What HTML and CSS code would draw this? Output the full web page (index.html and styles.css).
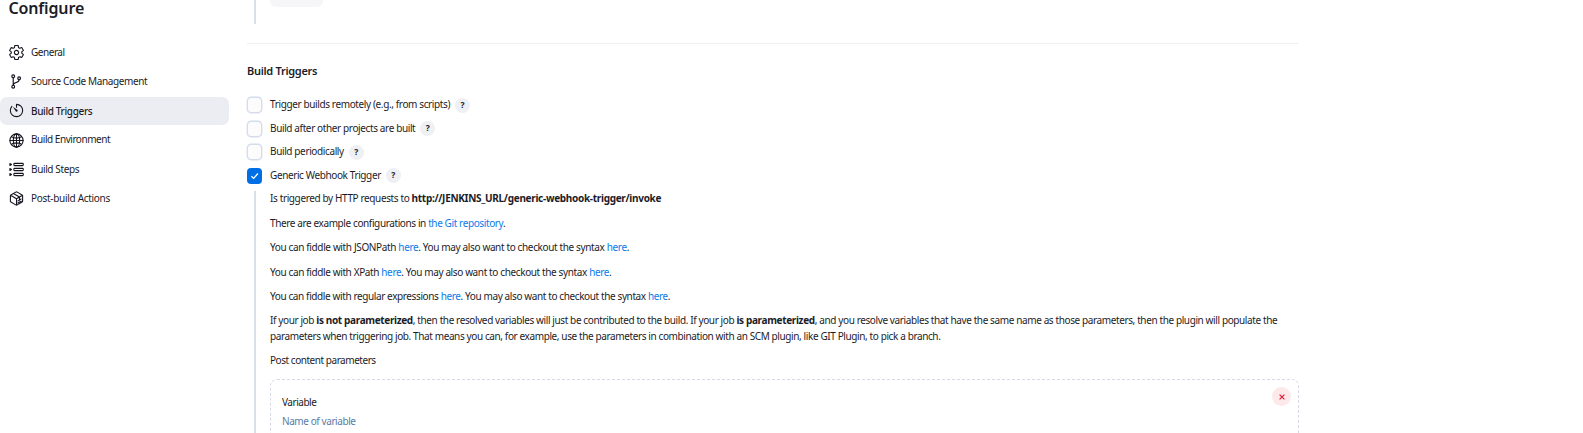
FILE: index.html
```html
<!DOCTYPE html>
<html lang="en">
<head>
<meta charset="utf-8">
<title>Configure</title>
<link rel="stylesheet" href="styles.css">
</head>
<body>
<div class="page">
  <aside class="side">
    <h1 class="title">Configure</h1>
    <nav class="nav">
      <a class="nav-item"><svg class="icon" viewBox="28 28 456 456"><path d="M262.29 192.31a64 64 0 1057.4 57.4 64.13 64.13 0 00-57.4-57.4zM416.39 256a154.34 154.34 0 01-1.53 20.79l45.21 35.46a10.81 10.81 0 012.45 13.75l-42.77 74a10.81 10.81 0 01-13.14 4.59l-44.9-18.08a16.11 16.11 0 00-15.17 1.75A164.48 164.48 0 01325 400.8a15.94 15.94 0 00-8.82 12.14l-6.73 47.89a11.08 11.08 0 01-10.68 9.17h-85.54a11.11 11.11 0 01-10.69-8.87l-6.72-47.82a16.07 16.07 0 00-9-12.22 155.3 155.3 0 01-21.46-12.57 16 16 0 00-15.11-1.71l-44.89 18.07a10.81 10.81 0 01-13.14-4.58l-42.77-74a10.8 10.8 0 012.45-13.75l38.21-30a16.05 16.05 0 006-14.08c-.36-4.17-.58-8.33-.58-12.5s.21-8.27.58-12.35a16 16 0 00-6.07-13.94l-38.19-30A10.81 10.81 0 0149.48 186l42.77-74a10.81 10.81 0 0113.14-4.59l44.9 18.08a16.11 16.11 0 0015.17-1.75A164.48 164.48 0 01187 111.2a15.94 15.94 0 008.82-12.14l6.73-47.89A11.08 11.08 0 01213.23 42h85.54a11.11 11.11 0 0110.69 8.87l6.72 47.82a16.07 16.07 0 009 12.22 155.3 155.3 0 0121.46 12.57 16 16 0 0015.11 1.71l44.89-18.07a10.81 10.81 0 0113.14 4.58l42.77 74a10.8 10.8 0 01-2.45 13.75l-38.21 30a16.05 16.05 0 00-6.05 14.08c.33 4.14.55 8.3.55 12.47z"/></svg><span class="tight">General</span></a>
      <a class="nav-item"><svg class="icon branch" viewBox="16 0 512 512"><circle cx="160" cy="80" r="48"/><circle cx="160" cy="432" r="48"/><circle cx="362" cy="144" r="48"/><path d="M160 384V128M362 192c0 128-202 64-202 192"/></svg><span>Source Code Management</span></a>
      <a class="nav-item active"><svg class="icon" viewBox="22 22 468 468"><path d="M112.91 128A191.85 191.85 0 0064 254c-1.18 106.35 85.65 193.8 192 194 106.2.2 192-85.83 192-192 0-104.54-83.55-189.61-187.5-192a4.36 4.36 0 00-4.5 4.37V152"/><path class="solid" d="M233.38 278.63l-79-113a8.13 8.13 0 0111.32-11.32l113 79a32.5 32.5 0 01-37.25 53.26 33.21 33.21 0 01-8.07-7.94z"/></svg><span class="loose">Build Triggers</span></a>
      <a class="nav-item"><svg class="icon" viewBox="20 20 472 472"><circle cx="256" cy="256" r="208"/><ellipse cx="256" cy="256" rx="100" ry="208"/><path d="M256 48v416M48 256h416M98 140q158 80 316 0M98 372q158-80 316 0"/></svg><span class="tight">Build Environment</span></a>
      <a class="nav-item"><svg class="icon" viewBox="16 16 480 480"><rect x="172" y="60" width="300" height="72" rx="20"/><rect x="172" y="220" width="300" height="72" rx="20"/><rect x="172" y="380" width="300" height="72" rx="20"/><path d="M44 64l52 32-52 32zM44 224l52 32-52 32zM44 384l52 32-52 32z"/></svg><span>Build Steps</span></a>
      <a class="nav-item"><svg class="icon" viewBox="20 20 472 472"><path d="M448 341.37V170.61A32 32 0 00432.11 143l-152-88.46a47.94 47.94 0 00-48.24 0L79.89 143A32 32 0 0064 170.61v170.76A32 32 0 0079.89 369l152 88.46a48 48 0 0048.24 0l152-88.46A32 32 0 00448 341.37zM69 153.99l187 110 187-110M256 463.99v-200M160 99l190 112v100M300 330l100-60M300 400l100-60"/></svg><span class="looser">Post-build Actions</span></a>
    </nav>
  </aside>
  <main class="main">
    <div class="previous"><div class="previous-button"></div></div>
    <h2 class="section">Build Triggers</h2>
    <div class="checks">
      <label class="check"><i class="box"></i><span>Trigger builds remotely (e.g., from scripts)</span><b class="help">?</b></label>
      <label class="check"><i class="box"></i><span>Build after other projects are built</span><b class="help">?</b></label>
      <label class="check"><i class="box"></i><span>Build periodically</span><b class="help">?</b></label>
      <label class="check"><i class="box on"><svg viewBox="0 0 15 16"><path d="M4.4 8.2l2.2 2.2 4.3-4.9"/></svg></i><span class="regex">Generic Webhook Trigger</span><b class="help">?</b></label>
    </div>
    <div class="details">
      <p>Is triggered by HTTP requests to <strong>http://JENKINS_URL/generic-webhook-trigger/invoke</strong></p>
      <p class="regex">There are example configurations in <a>the Git repository</a>.</p>
      <p class="loose-links">You can fiddle with JSONPath <a>here</a>. You may also want to checkout the syntax <a>here</a>.</p>
      <p>You can fiddle with XPath <a>here</a>. You may also want to checkout the syntax <a>here</a>.</p>
      <p class="regex">You can fiddle with regular expressions <a>here</a>. You may also want to checkout the syntax <a>here</a>.</p>
      <p class="job">If your job <strong>is not parameterized</strong>, then the resolved variables will just be contributed to the build. If your job <strong>is parameterized</strong>, and you resolve variables that have the same name as those parameters, then the plugin will populate the<br><span class="regex">parameters when triggering job. That means you can, for example, use the parameters in combination with an SCM plugin, like GIT Plugin, to pick a branch.</span></p>
      <p class="tight">Post content parameters</p>
      <div class="param">
        <button class="delete"><svg viewBox="0 0 10 10"><path d="M2.6 2.6l4.8 4.8M7.4 2.6l-4.8 4.8"/></svg></button>
        <div class="label tight">Variable</div>
        <div class="hint">Name of variable</div>
      </div>
    </div>
  </main>
</div>
</body>
</html>
```

FILE: styles.css
```css
* { box-sizing: border-box; }
body { margin: 0; background: #fff; color: #1c1c27; font: 10px/15.4px "Noto Sans", "Open Sans", sans-serif; letter-spacing: -.375px; overflow: hidden; }
.page { display: flex; height: 433px; overflow: hidden; }
.side { width: 247px; flex: none; }
.title { margin: 0; padding-left: 8.5px; height: 38.3px; font-size: 16px; line-height: 16px; font-weight: 600; letter-spacing: -.15px; white-space: nowrap; }
.nav { display: flex; flex-direction: column; gap: 1.3px; }
.nav-item { display: flex; align-items: center; width: 228.5px; height: 28px; padding-left: 8.5px; gap: 7.5px; border-radius: 7px; white-space: nowrap; }
.nav-item.active { background: #ecedf3; font-weight: 500; }
.nav-item.active span { padding-top: 1px; }
.tight { letter-spacing: -.46px; }
.loose { letter-spacing: -.36px; }
.looser { letter-spacing: -.3px; }
.loose-links { letter-spacing: -.363px; }
.icon { width: 15px; height: 15px; fill: none; stroke: #14141f; stroke-width: 34; stroke-linecap: round; stroke-linejoin: round; }
.icon.branch { stroke-width: 40; }
.icon .solid { fill: #14141f; stroke: none; }
.main { width: 1052px; flex: none; }
.previous { height: 24px; margin-left: 7px; border-left: 2px solid #d9dfeb; padding-left: 14px; }
.previous-button { width: 53px; height: 6.5px; background: #f6f6f8; border-radius: 0 0 6px 6px; }
.section { margin: 19px 0 0; border-top: 1px solid #f0f1f4; padding-top: 19px; height: 54px; font-size: 11px; line-height: 16px; font-weight: 600; letter-spacing: -.29px; }
.checks { display: flex; flex-direction: column; gap: 7.6px; }
.check { display: flex; align-items: center; height: 16px; white-space: nowrap; }
.box { width: 15px; height: 16px; border: 1.5px solid #d5dcea; border-radius: 4px; background: #fcfcfd; margin-right: 8px; box-shadow: 0 0 0 .4px #d5dcea; }
.box.on { background: #006fe6; border: 0; box-shadow: none; }
.box svg { display: block; width: 15px; height: 16px; fill: none; stroke: #fff; stroke-width: 1.3; }
.help { width: 15px; height: 15px; margin-left: 5px; border-radius: 50%; background: #eef0f4; font-size: 8.5px; line-height: 14px; letter-spacing: 0; text-align: center; }
.details { margin: 7.5px 0 0 7px; padding-left: 14px; border-left: 2px solid #d9dfeb; height: 260px; }
.details p { margin: 0 0 9px; white-space: nowrap; }
.details strong { letter-spacing: -.3px; }
.details .job { letter-spacing: -.386px; }
.details .job strong { letter-spacing: -.35px; }
.regex { letter-spacing: -.388px; }
.details a { color: #0b7bea; }
.param { position: relative; margin-top: 10.5px; height: 80px; border: 1px dashed #d5dae4; border-radius: 7px; padding: 15px 11px; }
.label { margin-bottom: 4px; }
.hint { color: #5a7ca6; letter-spacing: -.42px; }
.delete { position: absolute; right: 7px; top: 7px; width: 19px; height: 19px; padding: 0; border: 0; border-radius: 50%; background: #fde8ea; display: grid; place-items: center; }
.delete svg { width: 10px; height: 10px; fill: none; stroke: #e6203a; stroke-width: 1.2; }
```
